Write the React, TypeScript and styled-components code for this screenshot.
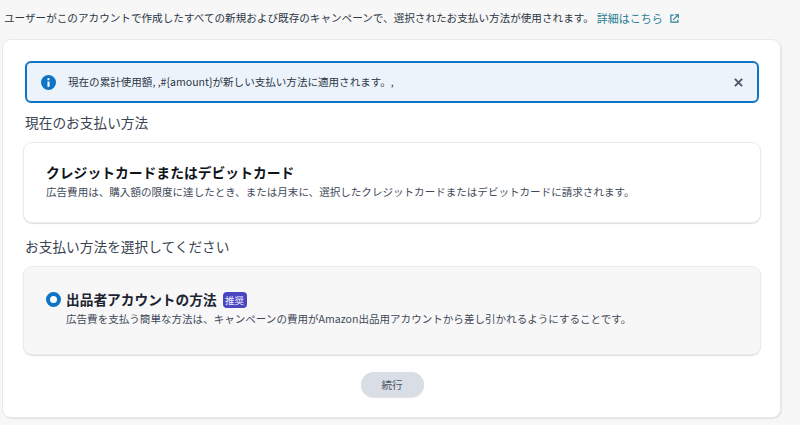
import React from "react";
import styled, { createGlobalStyle } from "styled-components";

const GlobalStyle = createGlobalStyle`
  html, body {
    margin: 0;
    padding: 0;
    background: #f7f7f7;
    overflow: hidden;
  }
  body {
    font-family: "Noto Sans CJK JP", "Open Sans", sans-serif;
    color: #232f3f;
  }
`;

const Page = styled.div`
  width: 800px;
  height: 425px;
  display: flex;
  flex-direction: column;
  padding: 0 20px 8px 3px;
  box-sizing: border-box;
`;

const Intro = styled.div`
  height: 40px;
  padding: 10px 0 0 1px;
  box-sizing: border-box;
  font-size: 10.6px;
  line-height: 16px;
  white-space: nowrap;
  display: flex;
  align-items: flex-start;
  color: #2b3645;
`;

const LearnMore = styled.a`
  color: #2a7f93;
  font-size: 11px;
  margin-left: 3px;
  display: inline-flex;
  align-items: center;
  gap: 7px;
`;

const Card = styled.div`
  flex: 1;
  background: #fff;
  border-radius: 8px;
  box-shadow: 0 0 0 1px #e9e9e9, 1px 1px 1px 1px #e2e2e2;
  padding: 21px 20px 20px 21px;
  display: flex;
  flex-direction: column;
`;

const Banner = styled.div`
  height: 42px;
  margin: 0 1px;
  box-sizing: border-box;
  background: #edf3fb;
  border: 2px solid #0f74c6;
  border-radius: 6px;
  display: flex;
  align-items: center;
  padding: 0 14px;
  font-size: 10.55px;
  color: #2b3645;
`;

const BannerText = styled.span`
  flex: 1;
  margin: -1px 0 0 12px;
`;

const SectionTitle = styled.div`
  font-size: 13.7px;
  line-height: 20px;
  color: #3a4452;
  margin-left: 1px;
`;

const CurrentTitle = styled(SectionTitle)`
  margin-top: 9px;
  margin-bottom: 11px;
`;

const SelectTitle = styled(SectionTitle)`
  margin-top: 14px;
  margin-bottom: 11px;
`;

const Method = styled.div<{ $muted?: boolean; $h: number; $top: number }>`
  height: ${(p) => p.$h}px;
  box-sizing: border-box;
  background: ${(p) => (p.$muted ? "#f7f7f7" : "#fff")};
  border-radius: 8px;
  box-shadow: 0 0 0 1px #ebebeb, 0 1px 1px 1px #e2e2e2;
  padding: ${(p) => p.$top}px 22px 0;
`;

const MethodTitle = styled.div`
  font-size: 13.8px;
  line-height: 20px;
  font-weight: 700;
  color: #0f141a;
`;

const MethodText = styled.div`
  font-size: 10.55px;
  line-height: 16px;
  color: #3f4a58;
  margin-top: 2px;
`;

const RadioRow = styled.div`
  display: flex;
  align-items: center;
  gap: 5px;
`;

const Radio = styled.span`
  width: 15px;
  height: 15px;
  box-sizing: border-box;
  border-radius: 50%;
  border: 4.5px solid #0f74c6;
  background: #fff;
  flex: none;
`;

const SellerTitle = styled(MethodTitle)`
  font-size: 13.7px;
  color: #1b2430;
  margin-top: -1px;
`;

const Badge = styled.span`
  background: #4a45c2;
  color: #f0effc;
  font-size: 9.5px;
  line-height: 16px;
  height: 16px;
  width: 24px;
  text-align: center;
  border-radius: 4px;
  margin-left: 1px;
`;

const SellerText = styled(MethodText)`
  margin-left: 20px;
  margin-top: 2px;
`;

const Actions = styled.div`
  display: flex;
  justify-content: center;
  margin-top: 18px;
`;

const ContinueButton = styled.button`
  width: 63px;
  height: 25px;
  border: none;
  border-radius: 13px;
  background: #d9dde5;
  box-shadow: 0 1px 1px rgba(0, 0, 0, 0.12);
  color: #4a5563;
  font-family: inherit;
  font-size: 10.5px;
  padding: 0;
`;

const InfoIcon = () => (
  <svg width="15" height="15" viewBox="0 0 16 16" style={{ flex: "none" }}>
    <circle cx="8" cy="8" r="8" fill="#0f74c6" />
    <rect x="6.9" y="7" width="2.2" height="5.6" fill="#fff" />
    <rect x="6.9" y="3.4" width="2.2" height="2.2" fill="#fff" />
  </svg>
);

const CloseIcon = () => (
  <svg width="9" height="9" viewBox="0 0 10 10" style={{ flex: "none" }}>
    <path d="M1 1l8 8M9 1l-8 8" stroke="#4b5666" strokeWidth="2.1" fill="none" />
  </svg>
);

const ExternalIcon = () => (
  <svg width="9" height="9" viewBox="0 0 10 10" style={{ flex: "none" }}>
    <path d="M4 1.2H1v7.8h7.8V6" stroke="#2a7f93" strokeWidth="1.3" fill="none" />
    <path d="M3.5 6.5L9 1M5.5 .8h3.7v3.7" stroke="#2a7f93" strokeWidth="1.3" fill="none" />
  </svg>
);

export default function App() {
  return (
    <Page>
      <GlobalStyle />
      <Intro>
        ユーザーがこのアカウントで作成したすべての新規および既存のキャンペーンで、選択されたお支払い方法が使用されます。
        <LearnMore>
          詳細はこちら
          <ExternalIcon />
        </LearnMore>
      </Intro>
      <Card>
        <Banner>
          <InfoIcon />
          <BannerText>現在の累計使用額, ,#{"{amount}"}が新しい支払い方法に適用されます。,</BannerText>
          <CloseIcon />
        </Banner>
        <CurrentTitle>現在のお支払い方法</CurrentTitle>
        <Method $h={79} $top={19}>
          <MethodTitle>クレジットカードまたはデビットカード</MethodTitle>
          <MethodText>
            広告費用は、購入額の限度に達したとき、または月末に、選択したクレジットカードまたはデビットカードに請求されます。
          </MethodText>
        </Method>
        <SelectTitle>お支払い方法を選択してください</SelectTitle>
        <Method $muted $h={87} $top={23}>
          <RadioRow>
            <Radio />
            <SellerTitle>出品者アカウントの方法</SellerTitle>
            <Badge>推奨</Badge>
          </RadioRow>
          <SellerText>
            広告費を支払う簡単な方法は、キャンペーンの費用がAmazon出品用アカウントから差し引かれるようにすることです。
          </SellerText>
        </Method>
        <Actions>
          <ContinueButton>続行</ContinueButton>
        </Actions>
      </Card>
    </Page>
  );
}
